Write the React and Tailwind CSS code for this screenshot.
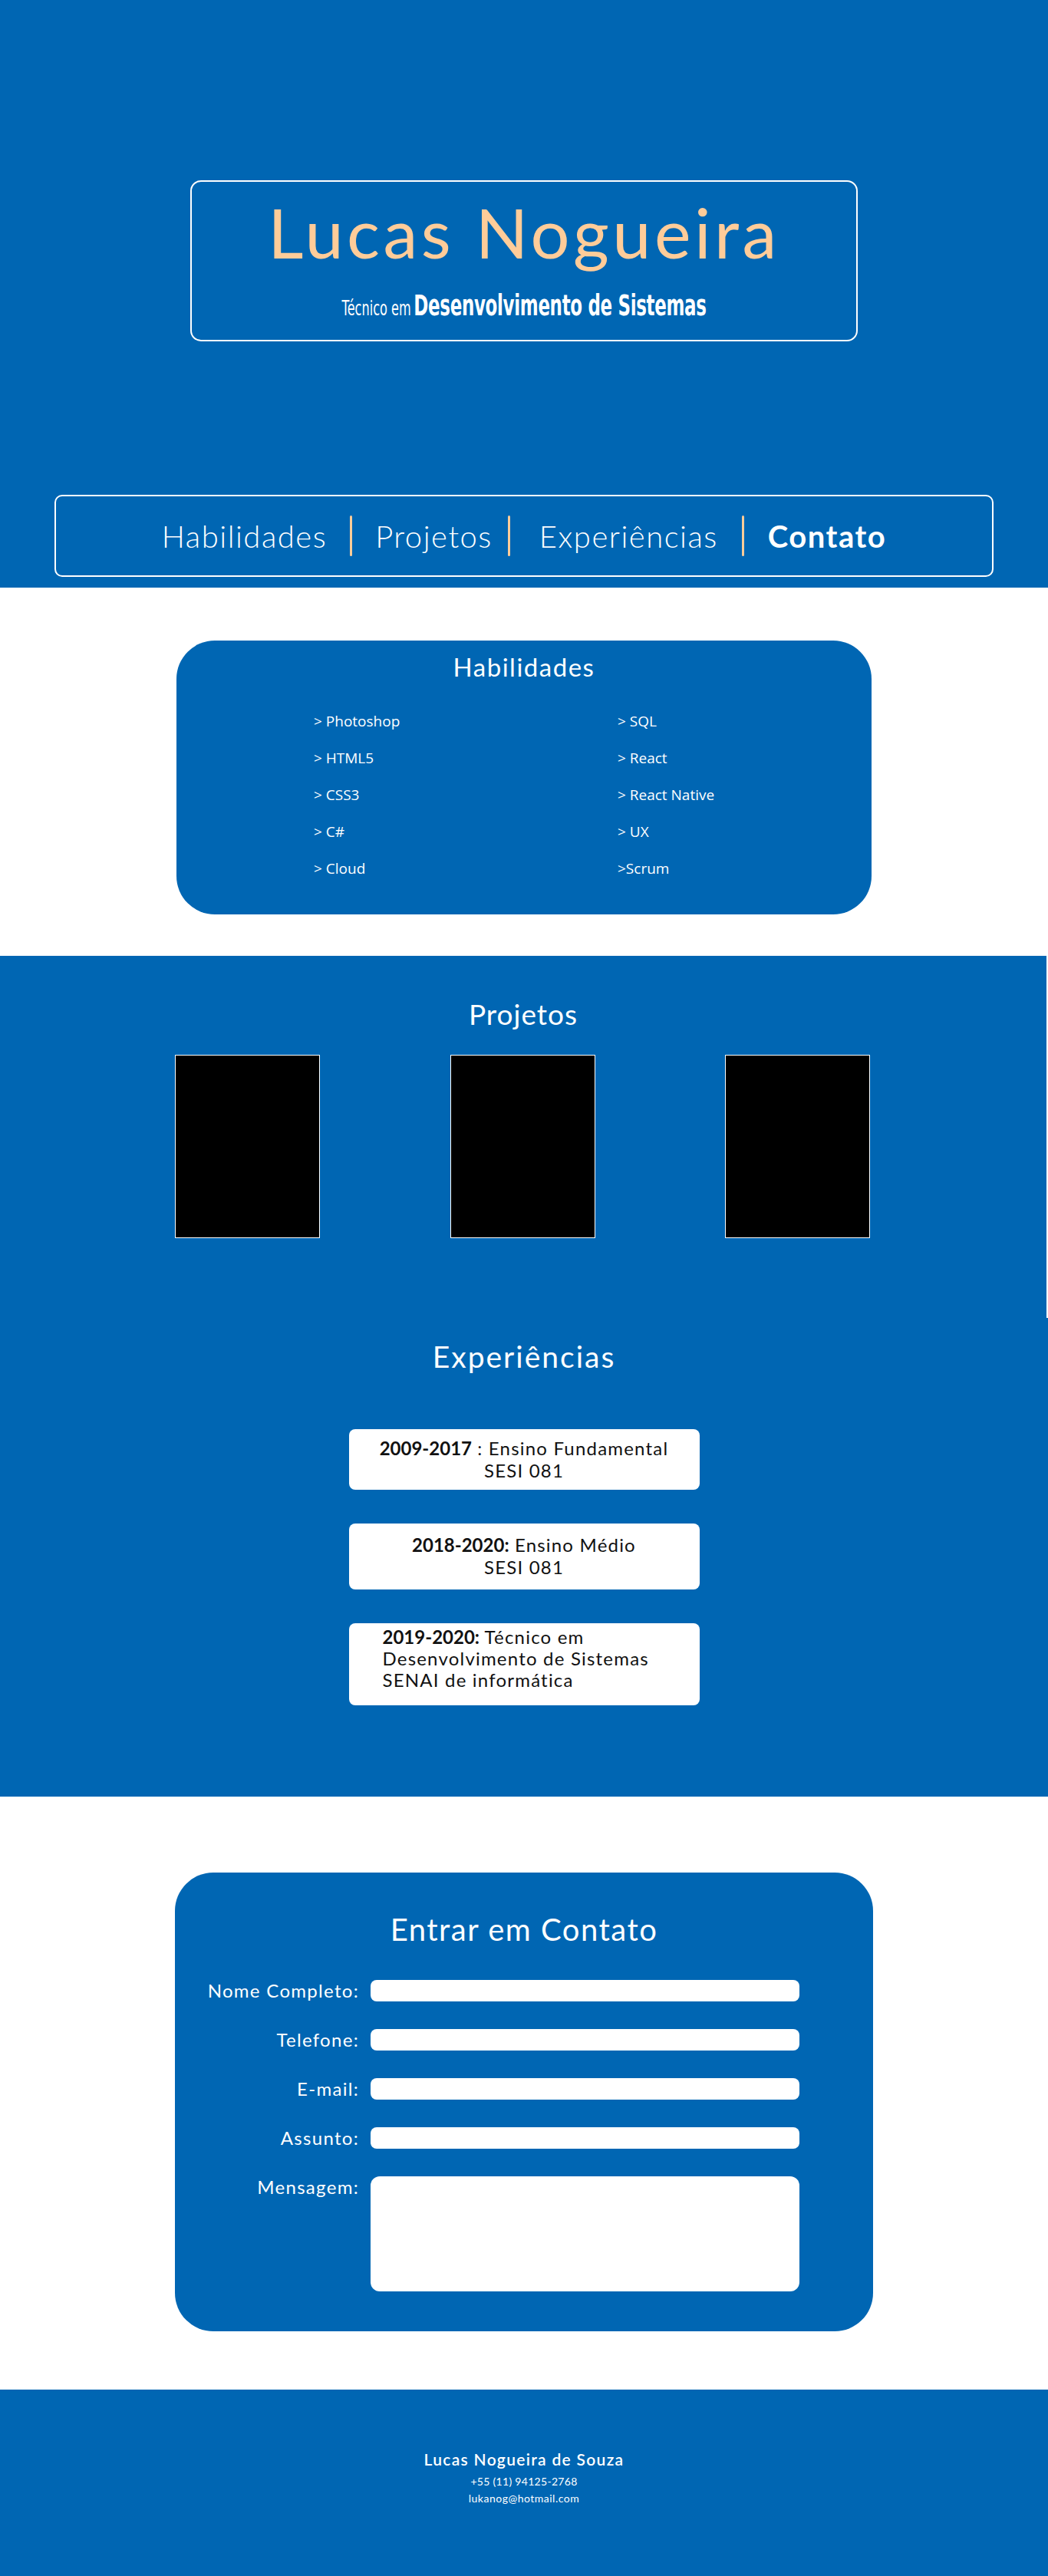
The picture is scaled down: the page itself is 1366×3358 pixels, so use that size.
const skillsLeft = ['> Photoshop', '> HTML5', '> CSS3', '> C#', '> Cloud'];
const skillsRight = ['> SQL', '> React', '> React Native', '> UX', '>Scrum'];

const round = { fontFamily: 'Lato, "Noto Sans", sans-serif' };
const narrow = { fontFamily: '"DejaVu Sans", "Liberation Sans", sans-serif' };
const skillFont = { fontFamily: '"Open Sans", "Noto Sans", sans-serif' };

const Sep = () => <span className="block w-[3px] h-[53px] bg-[#ffcc99] rounded-full" />;

const Field = ({ label, tall }) => (
    <div className="flex items-start">
        <label className="w-[255px] pr-[15px] text-right text-white text-[24px] leading-[28px] tracking-[1.3px]" style={round}>
            {label}
        </label>
        {tall ? (
            <textarea className="w-[559px] h-[150px] bg-white rounded-[12px] resize-none outline-none" />
        ) : (
            <input type="text" className="w-[559px] h-[28px] bg-white rounded-[8px] outline-none" />
        )}
    </div>
);

export default function App() {
    return (
        <div className="w-[1366px] bg-white" style={round}>
            {/* Header */}
            <header className="bg-[#0066b3] h-[766px] flex flex-col items-center pt-[235px]">
                <div className="w-[870px] h-[210px] border-2 border-white rounded-[14px] flex flex-col items-center pt-[20px]">
                    <h1 className="text-[#ffcc99] text-[90px] leading-none tracking-[4.5px]" style={round}>
                        Lucas Nogueira
                    </h1>
                    <p className="mt-[24px] text-white flex items-baseline gap-[6px] scale-x-[0.62]" style={narrow}>
                        <span className="text-[26px]">Técnico em</span>
                        <span className="text-[37px] font-bold tracking-[-0.5px]">Desenvolvimento de Sistemas</span>
                    </p>
                </div>

                <nav className="mt-[200px] w-[1224px] h-[107px] border-2 border-white rounded-[10px] flex items-center justify-center text-white text-[40px] tracking-[1.5px]">
                    <a className="font-light">Habilidades</a>
                    <span className="mx-[30px]"><Sep /></span>
                    <a className="font-light">Projetos</a>
                    <span className="ml-[20px] mr-[38px]"><Sep /></span>
                    <a className="font-light">Experiências</a>
                    <span className="mx-[31px]"><Sep /></span>
                    <a className="font-bold">Contato</a>
                </nav>
            </header>

            {/* Habilidades */}
            <section className="h-[480px] pt-[69px] flex justify-center">
                <div className="w-[906px] h-[357px] bg-[#0066b3] rounded-[50px] flex flex-col items-center pt-[14px]">
                    <h2 className="text-white text-[33px] leading-[40px] tracking-[1.5px]">Habilidades</h2>
                    <div className="mt-[37px] w-full flex pl-[179px]" style={skillFont}>
                        <ul className="w-[396px] flex flex-col gap-[20px]">
                            {skillsLeft.map(s => (
                                <li key={s} className="text-white text-[19px] leading-[28px]">{s}</li>
                            ))}
                        </ul>
                        <ul className="flex flex-col gap-[20px]">
                            {skillsRight.map(s => (
                                <li key={s} className="text-white text-[19px] leading-[28px]">{s}</li>
                            ))}
                        </ul>
                    </div>
                </div>
            </section>

            {/* Projetos */}
            <section className="w-[1364px] h-[472px] bg-[#0066b3] flex flex-col items-center pt-[52px]">
                <h2 className="text-white text-[37px] leading-[48px] tracking-[1px]">Projetos</h2>
                <div className="mt-[29px] w-[906px] ml-[-2px] flex justify-between">
                    {[1, 2, 3].map(i => (
                        <div key={i} className="w-[189px] h-[239px] bg-black border border-white" />
                    ))}
                </div>
            </section>

            {/* Experiencias */}
            <section className="h-[624px] bg-[#0066b3] flex flex-col items-center pt-[26px]">
                <h2 className="text-white text-[39px] leading-[48px] tracking-[2px]">Experiências</h2>
                <div className="mt-[71px] w-[457px] flex flex-col gap-[44px] text-[#111] text-[24px] leading-[29px] tracking-[1.2px]">
                    <div className="h-[79px] bg-white rounded-[8px] text-center pt-[10px]">
                        <b className="font-bold tracking-[0px]">2009-2017</b> : Ensino Fundamental<br />SESI 081
                    </div>
                    <div className="h-[86px] bg-white rounded-[8px] text-center pt-[13px]">
                        <b className="font-bold tracking-[0px]">2018-2020:</b> Ensino Médio<br />SESI 081
                    </div>
                    <div className="h-[107px] bg-white rounded-[8px] pl-[44px] pt-[4px] leading-[28px]">
                        <b className="font-bold tracking-[0px]">2019-2020:</b> Técnico em<br />Desenvolvimento de Sistemas<br />SENAI de informática
                    </div>
                </div>
            </section>

            {/* Contato */}
            <section className="h-[773px] pt-[99px] flex justify-center">
                <form className="w-[910px] h-[598px] bg-[#0066b3] rounded-[50px] pt-[50px] flex flex-col">
                    <h2 className="text-center text-white text-[40px] leading-[48px] tracking-[1.5px]">Entrar em Contato</h2>
                    <div className="mt-[42px] flex flex-col gap-[36px]">
                        <Field label="Nome Completo:" />
                        <Field label="Telefone:" />
                        <Field label="E-mail:" />
                        <Field label="Assunto:" />
                        <Field label="Mensagem:" tall />
                    </div>
                </form>
            </section>

            {/* Footer */}
            <footer className="h-[243px] bg-[#0066b3] flex flex-col items-center pt-[78px] text-white">
                <p className="text-[21px] leading-[26px] font-semibold tracking-[1.3px]">Lucas Nogueira de Souza</p>
                <p className="mt-[6px] text-[14px] leading-[20px] tracking-[0.3px]">+55 (11) 94125-2768</p>
                <p className="mt-[2px] text-[14px] leading-[20px] tracking-[0.5px]">lukanog@hotmail.com</p>
            </footer>
        </div>
    );
}
